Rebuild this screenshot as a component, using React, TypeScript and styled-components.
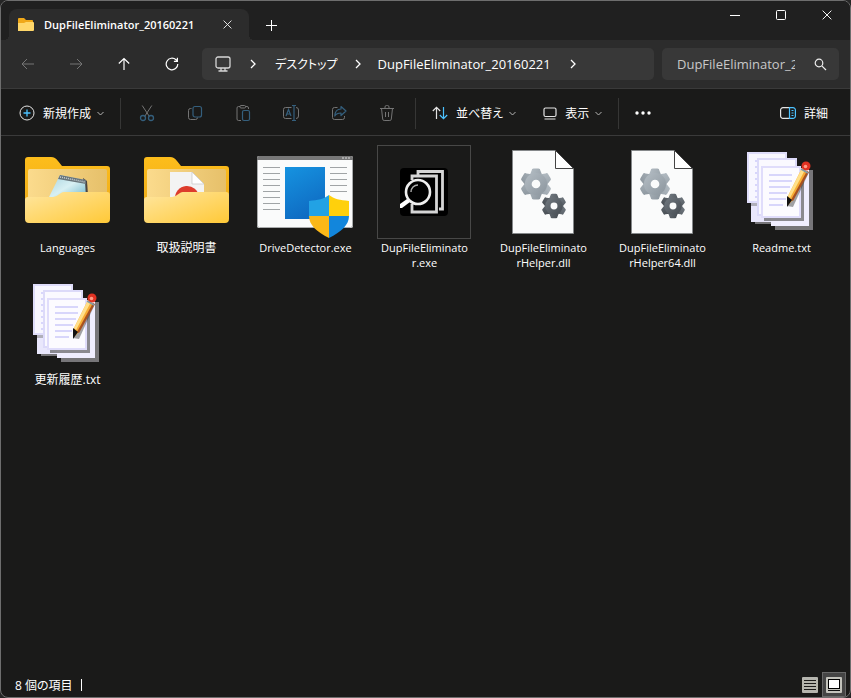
import React from 'react';
import styled, { createGlobalStyle } from 'styled-components';

const GlobalStyle = createGlobalStyle`
  * { box-sizing: border-box; }
  html, body { margin: 0; background: #262626; }
  body, button, input {
    font-family: "Open Sans", "Noto Sans CJK JP", sans-serif;
    font-feature-settings: "palt";
    color: #fff;
  }
  svg { display: block; flex: none; }
`;

const Window = styled.div`
  display: flex;
  flex-direction: column;
  min-height: 100vh;
  border: 1px solid #6e6e6e;
  border-radius: 8px;
  overflow: hidden;
  background: #1a1a19;
`;

const PlainButton = styled.button`
  display: flex;
  align-items: center;
  justify-content: center;
  padding: 0;
  border: 0;
  background: transparent;
  color: inherit;
`;

const TitleBar = styled.header`
  display: flex;
  align-items: flex-end;
  height: 39px;
  padding-left: 8px;
  background: #202020;
`;

const Tab = styled.div`
  position: relative;
  display: flex;
  align-items: center;
  gap: 10px;
  width: 240px;
  height: 31px;
  padding: 0 8px;
  border-radius: 8px 8px 0 0;
  background: #2c2c2c;
  &::before, &::after {
    content: "";
    position: absolute;
    bottom: 0;
    width: 5px;
    height: 5px;
  }
  &::before {
    left: -5px;
    background: radial-gradient(circle at 0 0, #202020 5px, #2c2c2c 5px);
  }
  &::after {
    right: -5px;
    background: radial-gradient(circle at 100% 0, #202020 5px, #2c2c2c 5px);
  }
`;

const TabTitle = styled.span`
  flex: 1;
  font-size: 11px;
  font-weight: 600;
  white-space: nowrap;
`;

const TabButton = styled(PlainButton)`
  width: 27px;
  height: 30px;
`;

const NewTab = styled(TabButton)`
  width: 44px;
`;

const CaptionButtons = styled.div`
  display: flex;
  align-self: flex-start;
  margin-left: auto;
`;

const CaptionButton = styled(PlainButton)`
  width: 46px;
  height: 28px;
`;

const NavBar = styled.nav`
  display: flex;
  align-items: center;
  height: 48px;
  padding: 0 11px 0 3px;
  background: #2c2c2c;
`;

const NavButton = styled(PlainButton)`
  width: 48px;
  height: 32px;
  color: ${(p) => (p.disabled ? '#757575' : '#fff')};
`;

const AddressBar = styled.div`
  display: flex;
  align-items: center;
  flex: 1;
  min-width: 0;
  height: 32px;
  margin: 0 8px 0 6px;
  padding-left: 13px;
  border-radius: 5px;
  background: #383838;
`;

const Crumb = styled(PlainButton)<{ $ja?: boolean }>`
  font-size: ${(p) => (p.$ja ? 12 : 13)}px;
  white-space: nowrap;
`;

const CrumbArrow = styled(PlainButton)<{ $wide?: boolean }>`
  width: ${(p) => (p.$wide ? 44 : 40)}px;
  height: 32px;
`;

const SearchBox = styled.label`
  display: flex;
  align-items: center;
  width: 177px;
  height: 32px;
  padding: 0 12px 0 15px;
  border-radius: 5px;
  background: #383838;
`;

const SearchInput = styled.input`
  flex: 1;
  min-width: 0;
  margin-right: 19px;
  padding: 0;
  border: 0;
  outline: 0;
  background: transparent;
  font-size: 13px;
  &::placeholder { color: #c8c8c8; opacity: 1; }
`;

const ToolBar = styled.div`
  display: flex;
  align-items: center;
  height: 48px;
  padding: 2px 22px 0 18px;
  border-top: 1px solid #3a3a3a;
  border-bottom: 1px solid #3a3a3a;
`;

const ToolButton = styled(PlainButton)`
  gap: 8px;
  height: 32px;
  font-size: 12px;
  white-space: nowrap;
`;

const Caption = styled.span`
  margin-right: -2px;
`;

const IconButton = styled(PlainButton)`
  width: 48px;
  height: 32px;
`;

const Divider = styled.span<{ $before: number; $after: number }>`
  width: 1px;
  height: 31px;
  margin: 0 ${(p) => p.$after}px 0 ${(p) => p.$before}px;
  background: #363635;
`;

const Spacer = styled.span`
  flex: 1;
`;

const ToolGroup = styled.div`
  display: flex;
  gap: 27px;
`;

const Files = styled.ul`
  display: grid;
  grid-template-columns: repeat(auto-fill, 118px);
  grid-auto-rows: 132px;
  column-gap: 1px;
  flex: 1;
  align-content: start;
  margin: 0;
  padding: 8px 0 0 7px;
  list-style: none;
`;

const File = styled.li`
  display: flex;
  flex-direction: column;
  align-items: center;
`;

const FileLabel = styled.span<{ $ja?: boolean }>`
  padding-left: 1px;
  font-size: ${(p) => (p.$ja ? 12 : 11)}px;
  line-height: 15px;
  text-align: center;
  white-space: pre;
`;

const StatusBar = styled.footer`
  display: flex;
  align-items: center;
  height: 25px;
  padding: 0 4px 0 14px;
  font-size: 12px;
`;

const StatusDivider = styled.span`
  width: 1px;
  height: 12px;
  margin-left: 8px;
  background: #fff;
`;

const ViewButton = styled(PlainButton)<{ $on?: boolean }>`
  width: 24px;
  height: 25px;
  border: 1px solid ${(p) => (p.$on ? '#686868' : 'transparent')};
  background: ${(p) => (p.$on ? '#454545' : 'transparent')};
`;

const Chevron = () => (
  <svg width="7" height="5" viewBox="0 0 7 5" fill="none" stroke="#b4b4b4"><path d="M.5 1l3 3 3-3" /></svg>
);
const Arrow = () => (
  <svg width="6" height="10" viewBox="0 0 6 10" fill="none" stroke="#fff" strokeWidth="1.3"><path d="M1 1l4 4-4 4" /></svg>
);
const Cross = ({ size }: { size: number }) => (
  <svg width={size} height={size} viewBox="0 0 11 11" stroke="#f4f4f4" strokeWidth="1.1"><path d="M.7.7l9.6 9.6M10.3.7L.7 10.3" /></svg>
);

const grey = '#747474';
const blue = '#345f7d';

const CutIcon = () => (
  <svg width="16" height="18" viewBox="0 0 16 18" fill="none" stroke={grey}>
    <path d="M3.2 1.5l7.2 11M12.8 1.5L5.6 12.5" />
    <g stroke={blue} strokeWidth="1.3"><circle cx="4" cy="14" r="2.5" /><circle cx="12" cy="14" r="2.5" /></g>
  </svg>
);
const CopyIcon = () => (
  <svg width="16" height="18" viewBox="0 0 16 18" fill="none" stroke={grey}>
    <path d="M4.5 4.500h-1a2 2 0 0 0-2 2v7a2 2 0 0 0 2 2h5a2 2 0 0 0 2-2" />
    <rect x="6" y="2.5" width="8.5" height="10.5" rx="2" stroke={blue} strokeWidth="1.2" />
  </svg>
);
const PasteIcon = () => (
  <svg width="16" height="18" viewBox="0 0 16 18" fill="none" stroke={grey}>
    <path d="M6 16.5H3.5A1.5 1.5 0 0 1 2 15V4a1.5 1.5 0 0 1 1.5-1.5H5M10.5 2.5H12A1.5 1.5 0 0 1 13.5 4v1" />
    <rect x="5" y="1.5" width="5.5" height="2.5" rx="1" />
    <rect x="7.5" y="6.5" width="7" height="10" rx="1.5" stroke={blue} strokeWidth="1.2" />
  </svg>
);
const RenameIcon = () => (
  <svg width="18" height="18" viewBox="0 0 18 18" fill="none" stroke={grey}>
    <path d="M9.5 3.5h-6a2 2 0 0 0-2 2v7a2 2 0 0 0 2 2h6M14 3.5A2.5 2.5 0 0 1 16.500 6v6a2.5 2.5 0 0 1-2.5 2.5" />
    <g stroke={blue} strokeWidth="1.2"><path d="M4 12l2.500-6.500L9 12M5 10h3" /><path d="M12 2v14M10 1.500h4M10 16.500h4" /></g>
  </svg>
);
const ShareIcon = () => (
  <svg width="16" height="18" viewBox="0 0 16 18" fill="none" stroke={grey}>
    <path d="M6.5 3.500h-3a2 2 0 0 0-2 2v8a2 2 0 0 0 2 2h8a2 2 0 0 0 2-2V12" />
    <path d="M10 2.500L15 7l-5 4.500V9C7 9 5 10 3.800 12 4 7.500 6.500 5 10 5z" stroke={blue} strokeWidth="1.2" strokeLinejoin="round" />
  </svg>
);
const TrashIcon = () => (
  <svg width="16" height="18" viewBox="0 0 16 18" fill="none" stroke={grey}>
    <path d="M1 4.500h14M6 4.500V3a1.500 1.500 0 0 1 1.500-1.500h1A1.500 1.500 0 0 1 10 3v1.500M2.500 4.500l1.200 10.600a1.500 1.500 0 0 0 1.500 1.400h5.600a1.500 1.500 0 0 0 1.500-1.400L13.500 4.500M6.500 8v5M9.500 8v5" />
  </svg>
);

const FolderBack = () => (
  <>
    <path d="M6 16a3 3 0 0 1 3-3h23c3 0 5 1.500 7 4l4 5h45a3 3 0 0 1 3 3v50H6z" fill="url(#folderBack)" />
    <path d="M9 27a2 2 0 0 1 2-2h75a2 2 0 0 1 2 2v30H9z" fill="url(#folderInner)" />
  </>
);
const FolderFront = () => (
  <path d="M6 56a3 3 0 0 1 3-3h23c3 0 5-.5 7-2l3-2c1-.7 2-1 4-1h42a3 3 0 0 1 3 3v24a4 4 0 0 1-4 4H10a4 4 0 0 1-4-4z" fill="url(#folderFront)" />
);

const Gear = ({ x, y, r, fill }: { x: number; y: number; r: number; fill: string }) => (
  <g transform={`translate(${x} ${y}) scale(${r / 15})`} fill={fill}>
    {[0, 60, 120].map((a) => (
      <path key={a} d="M-4.500-14q0-2 2-2h5q2 0 2 2L6.500-9V9l-2 5q0 2-2 2h-5q-2 0-2-2l-2-5V-9z" transform={`rotate(${a})`} />
    ))}
    <circle r="11.5" />
    <circle r="4.5" fill="#fafbfb" />
  </g>
);

const FolderNotes = () => (
  <>
    <FolderBack />
    <path d="M64 34l4 3 1 14-4 4z" fill="#4b4541" />
    <path d="M41 31l25 5 1 19H29z" fill="url(#note)" />
    <path d="M41 31l26 5v4l-28-5z" fill="#68747a" />
    <path d="M41 33l25 5" stroke="#c9d2d6" strokeWidth="1.5" strokeDasharray="1 1" />
    <FolderFront />
  </>
);
const FolderPdf = () => (
  <>
    <FolderBack />
    <path d="M32 28h22l12 12v16H32z" fill="#f3f3f3" />
    <path d="M54 28l12 12H54z" fill="#fff" stroke="#c4c4c4" strokeWidth=".7" />
    <path d="M37 55a12 12 0 0 1 24-2v3z" fill="#dd3c2c" />
    <path d="M39 54l4-4h11l4 4z" fill="#f3dcd2" />
    <FolderFront />
  </>
);
const DriveApp = () => (
  <>
    <rect y="12" width="96" height="72" rx="2" fill="#fafbfb" />
    <path d="M0 16v-2a2 2 0 0 1 2-2h92a2 2 0 0 1 2 2v2z" fill="#777" />
    <path d="M85 14h2M88 14h2M91 14h2" stroke="#ddd" />
    <path d="M.5 16v66a2 2 0 0 0 2 1.5h91a2 2 0 0 0 2-1.500V16" fill="none" stroke="#a9abac" />
    {[23, 29, 35, 41, 47, 53, 59, 65].map((y) => (
      <path key={y} d={`M6 ${y + 0.5}h17${y < 50 ? 'm50 0h17' : ''}`} stroke="#a0a4a6" />
    ))}
    <rect x="28" y="23" width="40" height="52" fill="url(#blue)" />
    <clipPath id="shield"><path d="M72 51c5 4 11 5 20 6v15c0 9-8 16-20 22-12-6-20-13-20-22V57c9-1 15-2 20-6z" /></clipPath>
    <g clipPath="url(#shield)">
      <path d="M52 50h20v22H52z" fill="#22a2e4" /><path d="M72 50h20v22H72z" fill="#ffd00c" />
      <path d="M52 72h20v23H52z" fill="#fbb818" /><path d="M72 72h20v23H72z" fill="#1286dc" />
    </g>
  </>
);
const SearchApp = () => (
  <>
    <rect x="1.5" y="1.5" width="93" height="93" fill="none" stroke="#484847" />
    <rect x="24" y="24" width="48" height="48" rx="4" fill="#000" />
    <g fill="none" stroke="#d5d5d5" strokeWidth="2.8">
      <path d="M42 31v-3.500h24.500V65H63M36 36v-4h24.500v36H36v-8" />
    </g>
    <circle cx="42" cy="48" r="12" fill="#000" stroke="#eee" strokeWidth="2.6" />
    <path d="M35 48c0-4 3-7 7-7" fill="none" stroke="#aaa" strokeWidth="1.5" />
    <path d="M24 60l7-5 3 3-8 6h-2z" fill="#fff" />
  </>
);
const DllFile = () => (
  <>
    <path d="M17.500 6.500h43l18 18v65h-61z" fill="#fafbfb" stroke="#85888a" />
    <path d="M60.500 6.500v18h18z" fill="#fff" stroke="#444" />
    <Gear x={41} y={40} r={14.5} fill="url(#gearLight)" />
    <Gear x={59} y={62} r={11.5} fill="url(#gearDark)" />
  </>
);
const TextFile = () => (
  <>
    <path d="M22 79h20v7h38V26h-5" fill="#777679" />
    <path d="M22 40h36v40H22z" fill="#777679" />
    <path d="M18 40h37v38H18z" fill="#e9e7fc" />
    <path d="M38 24h38v58H38z" fill="#f0eeff" />
    <path d="M18 59h36v3H18z" fill="#777" opacity=".5" />
    <path d="M14 8h40v51H14z" fill="#dfddfa" />
    <path d="M16 10h36v47H16z" fill="#f8f7ff" />
    <path d="M24 14h40v58H24z" fill="#dcdaf9" />
    <path d="M26 16h36v54H26z" fill="#faf9ff" />
    <path d="M31 25h40v52H31z" fill="#555" opacity=".65" />
    <path d="M28 22h40v52H28z" fill="#e0ddfb" />
    <path d="M30 24h36v48H30z" fill="#fcfbff" />
    <path d="M36 31h23M36 37h23M36 43h21M36 49h18M36 55h17M36 61h14" stroke="#d8d6fb" strokeWidth="2" />
    <path d="M22 17h2M22 23h2M22 29h2M22 35h2M22 41h2M22 47h2M22 53h2" stroke="#d8d6fb" strokeWidth="2" />
    <path d="M69 33l7-5-16 35-6-1z" fill="#333" opacity=".45" />
    <path d="M69 24l6 4-15 28-5 5v-9z" fill="#f7ac35" />
    <path d="M69 24l3 2-15 28-2-2z" fill="#ffe08a" />
    <path d="M74 27l2 1-16 29-2-1z" fill="#a85120" />
    <path d="M54 52l5 4-5 7z" fill="#111" />
    <circle cx="73" cy="22" r="4.5" fill="#e03222" />
    <circle cx="72.5" cy="22.5" r="1.8" fill="#ff9b86" />
    <path d="M68 25l7 4" stroke="#8298a5" strokeWidth="1.5" />
  </>
);

const files = [
  { label: 'Languages', Icon: FolderNotes },
  { label: '取扱説明書', Icon: FolderPdf, ja: true },
  { label: 'DriveDetector.exe', Icon: DriveApp },
  { label: 'DupFileEliminato\nr.exe', Icon: SearchApp },
  { label: 'DupFileEliminato\nrHelper.dll', Icon: DllFile },
  { label: 'DupFileEliminato\nrHelper64.dll', Icon: DllFile },
  { label: 'Readme.txt', Icon: TextFile },
  { label: '更新履歴.txt', Icon: TextFile, ja: true },
];

const editTools = [
  { label: '切り取り', Icon: CutIcon },
  { label: 'コピー', Icon: CopyIcon },
  { label: '貼り付け', Icon: PasteIcon },
  { label: '名前の変更', Icon: RenameIcon },
  { label: '共有', Icon: ShareIcon },
  { label: '削除', Icon: TrashIcon },
];

const Gradients = () => (
  <defs>
    <linearGradient id="folderBack" x2="0" y2="1"><stop stopColor="#fdbd1b" /><stop offset="1" stopColor="#eba91a" /></linearGradient>
    <linearGradient id="folderInner" x2="1" y2="0"><stop stopColor="#fbdb8d" /><stop offset="1" stopColor="#e6c06a" /></linearGradient>
    <linearGradient id="folderFront" x2="1" y2="1"><stop stopColor="#ffe6a0" /><stop offset="1" stopColor="#ffc937" /></linearGradient>
    <linearGradient id="note" x2="1" y2="1"><stop stopColor="#a5d2dd" /><stop offset=".5" stopColor="#d8f0f3" /><stop offset="1" stopColor="#6db5c9" /></linearGradient>
    <linearGradient id="blue" x2=".4" y2="1"><stop stopColor="#1693e0" /><stop offset="1" stopColor="#0f6cc3" /></linearGradient>
    <linearGradient id="gearLight" x2="1" y2="1"><stop stopColor="#b4bdc4" /><stop offset="1" stopColor="#8b959d" /></linearGradient>
    <linearGradient id="gearDark" x2="1" y2="1"><stop stopColor="#727a81" /><stop offset="1" stopColor="#454b51" /></linearGradient>
  </defs>
);

export default function App() {
  return (
    <Window>
      <GlobalStyle />
      <TitleBar>
        <Tab>
          <svg width="17" height="15" viewBox="0 0 17 15">
            <path d="M1 2a1 1 0 0 1 1-1h5l2 2h6a1 1 0 0 1 1 1v8H1z" fill="#f0a818" />
            <path d="M1 6h6l2-1h7a1 1 0 0 1 1 1v7a1 1 0 0 1-1 1H1z" fill="#ffd76a" />
          </svg>
          <TabTitle>DupFileEliminator_20160221</TabTitle>
          <TabButton aria-label="タブを閉じる"><Cross size={9} /></TabButton>
        </Tab>
        <NewTab aria-label="新しいタブ">
          <svg width="11" height="11" viewBox="0 0 11 11" stroke="#fff"><path d="M5.5 0v11M0 5.500h11" /></svg>
        </NewTab>
        <CaptionButtons>
          <CaptionButton aria-label="最小化"><svg width="10" height="10" viewBox="0 0 10 10" stroke="#fff"><path d="M0 5.500h10" /></svg></CaptionButton>
          <CaptionButton aria-label="最大化"><svg width="10" height="10" viewBox="0 0 10 10" fill="none" stroke="#fff"><rect x=".5" y=".5" width="9" height="9" rx="1" /></svg></CaptionButton>
          <CaptionButton aria-label="閉じる"><Cross size={10} /></CaptionButton>
        </CaptionButtons>
      </TitleBar>

      <NavBar>
        <NavButton disabled aria-label="戻る"><svg width="14" height="12" viewBox="0 0 14 12" fill="none" stroke="currentColor"><path d="M13 6H1M6 1L1 6l5 5" /></svg></NavButton>
        <NavButton disabled aria-label="進む"><svg width="14" height="12" viewBox="0 0 14 12" fill="none" stroke="currentColor"><path d="M1 6h12M8 1l5 5-5 5" /></svg></NavButton>
        <NavButton aria-label="上へ"><svg width="12" height="14" viewBox="0 0 12 14" fill="none" stroke="currentColor" strokeWidth="1.2"><path d="M6 13V1.500M.8 6.500L6 1.500l5.200 5" /></svg></NavButton>
        <NavButton aria-label="更新"><svg width="14" height="14" viewBox="0 0 14 14" fill="none" stroke="currentColor" strokeWidth="1.2"><path d="M12.800 7A5.800 5.800 0 1 1 11 2.800L12.300 4M12.400.8V4.300H8.900" /></svg></NavButton>
        <AddressBar>
          <PlainButton aria-label="PC">
            <svg width="16" height="16" viewBox="0 0 16 16" fill="none" stroke="#d6d6d6" strokeWidth="1.3"><rect x="1" y="1" width="14" height="11" rx="2" /><path d="M6 12v2.500M10 12v2.500M3.500 15h9" /></svg>
          </PlainButton>
          <CrumbArrow $wide aria-label="PC を展開"><Arrow /></CrumbArrow>
          <Crumb $ja>デスクトップ</Crumb>
          <CrumbArrow aria-label="デスクトップを展開"><Arrow /></CrumbArrow>
          <Crumb>DupFileEliminator_20160221</Crumb>
          <CrumbArrow $wide aria-label="フォルダーを展開"><Arrow /></CrumbArrow>
        </AddressBar>
        <SearchBox>
          <SearchInput aria-label="検索" placeholder="DupFileEliminator_20160221の検索" />
          <svg width="13" height="13" viewBox="0 0 13 13" fill="none" stroke="#eee" strokeWidth="1.2"><circle cx="5" cy="5" r="3.8" /><path d="M7.800 7.800l4.200 4.200" /></svg>
        </SearchBox>
      </NavBar>

      <ToolBar>
        <ToolButton>
          <svg width="16" height="16" viewBox="0 0 16 16" fill="none" stroke="#e4e4e4"><circle cx="8" cy="8" r="7" /><path d="M8 4.500v7M4.500 8h7" stroke="#4cc2ff" strokeWidth="1.3" /></svg>
          <Caption>新規作成</Caption>
          <Chevron />
        </ToolButton>
        <Divider $before={16} $after={2} />
        {editTools.map(({ label, Icon }) => (
          <IconButton key={label} aria-label={label} disabled><Icon /></IconButton>
        ))}
        <Divider $before={4} $after={16} />
        <ToolGroup>
          <ToolButton>
            <svg width="16" height="14" viewBox="0 0 16 14" fill="none" strokeWidth="1.2"><path d="M4.500 13V1.500M.8 5l3.700-3.700L8.200 5" stroke="#e4e4e4" /><path d="M11.500 1v11.500M7.800 9l3.700 3.700L15.200 9" stroke="#4cc2ff" /></svg>
            <Caption>並べ替え</Caption>
            <Chevron />
          </ToolButton>
          <ToolButton>
            <svg width="14" height="13" viewBox="0 0 14 13" fill="none" stroke="#e4e4e4" strokeWidth="1.2"><rect x="1" y="1" width="12" height="8.5" rx="1.5" /><path d="M1.500 12h11" /></svg>
            <Caption>表示</Caption>
            <Chevron />
          </ToolButton>
        </ToolGroup>
        <Divider $before={16} $after={0} />
        <IconButton aria-label="もっと見る">
          <svg width="16" height="4" viewBox="0 0 16 4" fill="#fff"><circle cx="2" cy="2" r="1.7" /><circle cx="8" cy="2" r="1.7" /><circle cx="14" cy="2" r="1.7" /></svg>
        </IconButton>
        <Spacer />
        <ToolButton>
          <svg width="16" height="12" viewBox="0 0 16 12" fill="none"><path d="M9 .6H3A2.400 2.400 0 0 0 .6 3v6A2.400 2.400 0 0 0 3 11.400h6" stroke="#e4e4e4" strokeWidth="1.2" /><path d="M9.500.6H13A2.400 2.400 0 0 1 15.400 3v6a2.400 2.400 0 0 1-2.400 2.400H9.500zM11.500 3.500h2M11.500 6h2M11.500 8.500h2" stroke="#4cc2ff" strokeWidth="1.2" /></svg>
          <span>詳細</span>
        </ToolButton>
      </ToolBar>

      <Files>
        {files.map(({ label, Icon, ja }, i) => (
          <File key={label}>
            <svg width="96" height="96" viewBox="0 0 96 96" aria-hidden="true">
              {i === 0 && <Gradients />}
              <Icon />
            </svg>
            <FileLabel $ja={ja}>{label}</FileLabel>
          </File>
        ))}
      </Files>

      <StatusBar>
        <span>8 個の項目</span>
        <StatusDivider />
        <Spacer />
        <ViewButton aria-label="詳細表示">
          <svg width="16" height="16" viewBox="0 0 16 16"><rect width="16" height="16" rx="1" fill="#b5b5ae" /><path d="M2 3.500h12M2 6.500h12M2 9.500h12M2 12.500h12" stroke="#1a1a1a" /></svg>
        </ViewButton>
        <ViewButton $on aria-label="大アイコン表示">
          <svg width="16" height="16" viewBox="0 0 16 16"><rect width="16" height="16" rx="1" fill="#c3c3bc" /><rect x="2.5" y="2.5" width="11" height="9" fill="#fff" stroke="#000" /><path d="M2 13.500h12" stroke="#111" /></svg>
        </ViewButton>
      </StatusBar>
    </Window>
  );
}
